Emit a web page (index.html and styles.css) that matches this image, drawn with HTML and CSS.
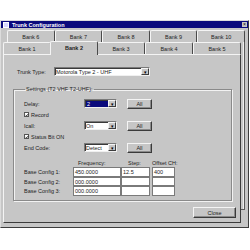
FILE: index.html
```html
<!DOCTYPE html>
<html lang="en">
<head>
  <meta charset="UTF-8">
  <title>Trunk Configuration</title>
  <link rel="stylesheet" href="styles.css">
</head>
<body>
  <div class="window">
    <div class="titlebar">
      <span class="app-icon"></span>
      <span class="title">Trunk Configuration</span>
      <span class="close-x">×</span>
    </div>

    <div class="client">
      <div class="tabs back">
        <div class="tab">Bank 6</div>
        <div class="tab">Bank 7</div>
        <div class="tab">Bank 8</div>
        <div class="tab">Bank 9</div>
        <div class="tab">Bank 10</div>
      </div>
      <div class="stack">
        <div class="front-col">
          <div class="tabs front">
            <div class="tab">Bank 1</div>
            <div class="tab active">Bank 2</div>
            <div class="tab">Bank 3</div>
            <div class="tab">Bank 4</div>
            <div class="tab">Bank 5</div>
          </div>

          <div class="panel">
            <div class="trunk-row">
              <span class="label">Trunk Type:</span>
              <div class="select wide"><span class="val">Motorola Type 2 - UHF</span><span class="drop">▾</span></div>
            </div>

            <fieldset class="group">
              <legend>Settings (T2 VHF T2-UHF):</legend>

              <div class="row">
                <span class="label">Delay:</span>
                <div class="select"><span class="val"><span class="hl">2</span></span><span class="drop">▾</span></div>
                <button class="btn">All</button>
              </div>
              <div class="check-row">
                <span class="check"><svg viewBox="0 0 5 5"><path d="M1 2.4 L2 3.6 L4 1.2" fill="none" stroke="#000" stroke-width="0.9"/></svg></span>
                <span>Record</span>
              </div>
              <div class="row">
                <span class="label">Icall:</span>
                <div class="select"><span class="val">On</span><span class="drop">▾</span></div>
                <button class="btn">All</button>
              </div>
              <div class="check-row">
                <span class="check"><svg viewBox="0 0 5 5"><path d="M1 2.4 L2 3.6 L4 1.2" fill="none" stroke="#000" stroke-width="0.9"/></svg></span>
                <span>Status Bit ON</span>
              </div>
              <div class="row">
                <span class="label">End Code:</span>
                <div class="select"><span class="val">Detect</span><span class="drop">▾</span></div>
                <button class="btn">All</button>
              </div>

              <div class="config">
                <span></span>
                <span class="head">Frequency:</span>
                <span class="head">Step:</span>
                <span></span>
                <span class="head">Offset CH:</span>

                <span class="label">Base Config 1:</span>
                <span class="cell">450.0000</span>
                <span class="cell">12.5</span>
                <span></span>
                <span class="cell">400</span>

                <span class="label">Base Config 2:</span>
                <span class="cell">000.0000</span>
                <span class="cell"></span>
                <span></span>
                <span class="cell"></span>

                <span class="label">Base Config 3:</span>
                <span class="cell">000.0000</span>
                <span class="cell"></span>
                <span></span>
                <span class="cell"></span>
              </div>
            </fieldset>

            <div class="footer">
              <button class="btn close">Close</button>
            </div>
          </div>
        </div>
        <div class="edge"></div>
      </div>
    </div>
  </div>
</body>
</html>
```

FILE: styles.css
```css
body { margin: 0; background: #fff; font-family: "Liberation Sans", Arial, sans-serif; font-size: 5.5px; color: #222; }

.window { margin-top: 20px; width: 249px; height: 208px; box-sizing: border-box; background: #c6c6c6; border: 1px solid; border-color: #dcdcdc #3c3c3c #3c3c3c #dcdcdc; }

.titlebar { height: 7px; background: #0a0a7c; color: #fff; display: flex; align-items: center; padding: 0 1px 0 2px; }
.app-icon { width: 4px; height: 4px; background: #d8d8ff; border: 0.5px solid #fff; margin-right: 3px; }
.title { font-weight: bold; flex: 1; }
.close-x { width: 5px; height: 5px; background: #c6c6c6; color: #000; font-size: 5px; line-height: 5px; text-align: center; }

.client { padding: 2px 0 0 2px; }

.tabs { display: flex; height: 12px; width: 238px; box-sizing: border-box; }
.tabs.back { margin-left: 4px; }
.tab { flex: 1; box-sizing: border-box; display: flex; align-items: center; justify-content: center; border: 1px solid; border-bottom: none; border-color: #f4f4f4 #4a4a4a #4a4a4a #f4f4f4; border-radius: 2px 2px 0 0; background: #c6c6c6; }
.tab.active { font-weight: bold; position: relative; z-index: 1; margin: -1px -1px -1px -1px; padding-bottom: 1px; }

.stack { display: flex; }
.front-col { width: 238px; }
.edge { width: 4px; height: 168px; box-sizing: border-box; border-right: 1px solid #5a5a5a; border-bottom: 1px solid #5a5a5a; box-shadow: inset -1px 0 #f0f0f0; }

.panel { height: 169px; box-sizing: border-box; border: 1px solid; border-color: #f4f4f4 #3c3c3c #3c3c3c #f4f4f4; display: flex; flex-direction: column; }

.trunk-row { display: flex; align-items: center; margin: 12px 0 0 13px; height: 9px; }
.trunk-row .label { width: 37px; }

.select { display: flex; height: 9px; width: 33px; box-sizing: border-box; background: #fff; border: 1px solid; border-color: #7a7a7a #f0f0f0 #f0f0f0 #7a7a7a; box-shadow: inset 1px 1px #3a3a3a; }
.select.wide { width: 96px; }
.select .val { flex: 1; display: flex; align-items: center; padding-left: 1px; overflow: hidden; white-space: nowrap; }
.select .hl { background: #0a0a7c; color: #fff; display: block; width: 23px; padding-left: 1px; line-height: 6px; }
.select .drop { width: 6px; background: #c6c6c6; border: 0.5px solid; border-color: #f4f4f4 #3c3c3c #3c3c3c #f4f4f4; font-size: 5px; line-height: 6px; text-align: center; color: #000; }

.group { margin: 10px 8px 0 9px; padding: 6px 0 10px 10px; height: 115px; box-sizing: border-box; border: 1px solid #8a8a8a; box-shadow: 1px 1px #f2f2f2, inset 1px 1px #f2f2f2; }
.group legend { padding: 0 1px; margin-left: 1px; }

.row { display: grid; grid-template-columns: 50px 33px 25px; column-gap: 10px; align-items: center; height: 11px; }
.check-row { display: flex; align-items: center; gap: 2px; height: 11px; }
.check { width: 5px; height: 5px; box-sizing: border-box; background: #fff; border: 0.5px solid #555; display: block; }
.check svg { display: block; width: 4px; height: 4px; }

.btn { font: inherit; color: #222; height: 10px; padding: 0; background: #c6c6c6; border: 1px solid; border-color: #f4f4f4 #3a3a3a #3a3a3a #f4f4f4; box-shadow: inset -1px -1px #8a8a8a; }

.config { display: grid; grid-template-columns: 49px 48px 29px 2px 23px; grid-template-rows: 9px 10px 9px 10px; margin-top: 5px; align-items: center; }
.config .head { padding-left: 5px; white-space: nowrap; }
.config .head:nth-child(3) { padding-left: 7px; }
.config .head:nth-child(5) { padding-left: 0; }
.cell { height: 100%; box-sizing: border-box; background: #fff; border: 0.5px solid #7a7a7a; padding-left: 1px; display: flex; align-items: center; }

.footer { display: flex; justify-content: flex-end; margin: 6px 4px 0 0; }
.btn.close { width: 43px; height: 11px; }
```
